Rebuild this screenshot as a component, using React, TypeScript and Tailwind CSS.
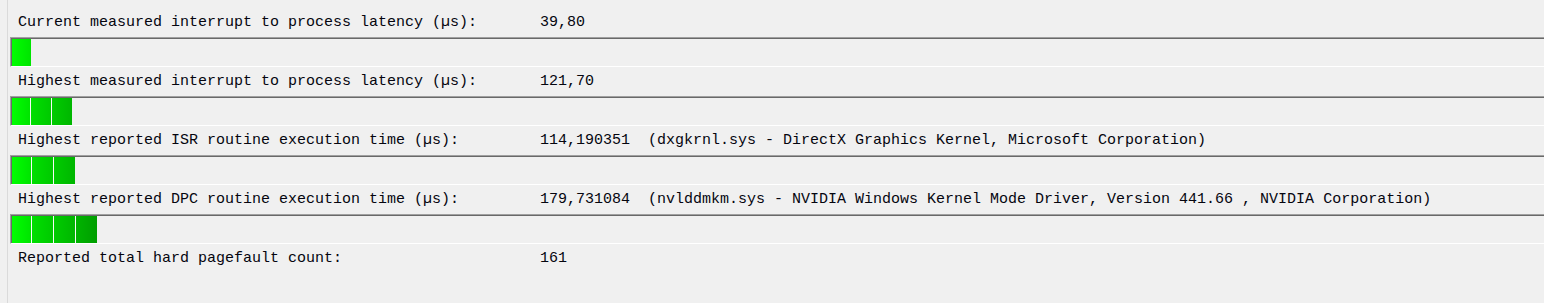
const rows = [
  {
    label: "Current measured interrupt to process latency (µs):",
    value: "39,80",
    segments: [19],
  },
  {
    label: "Highest measured interrupt to process latency (µs):",
    value: "121,70",
    segments: [18, 20, 20],
  },
  {
    label: "Highest reported ISR routine execution time (µs):",
    value: "114,190351  (dxgkrnl.sys - DirectX Graphics Kernel, Microsoft Corporation)",
    segments: [19, 21, 21],
  },
  {
    label: "Highest reported DPC routine execution time (µs):",
    value:
      "179,731084  (nvlddmkm.sys - NVIDIA Windows Kernel Mode Driver, Version 441.66 , NVIDIA Corporation)",
    segments: [19, 21, 21, 21],
  },
  {
    label: "Reported total hard pagefault count:",
    value: "161",
    segments: null,
  },
];

const segmentColors = [
  "bg-gradient-to-r from-[#00ff00] to-[#00e400]",
  "bg-gradient-to-r from-[#00df00] to-[#00c900]",
  "bg-gradient-to-r from-[#00cc00] to-[#00b600]",
  "bg-gradient-to-r from-[#00b400] to-[#009e00]",
];

function LatencyBar({ segments }: { segments: number[] }) {
  return (
    <div className="ml-[2px] h-[30px] border-t border-l border-b border-t-[#a0a0a0] border-l-[#a0a0a0] border-b-white">
      <div className="h-full flex border-t border-l border-[#696969]">
        {segments.map((w, i) => (
          <div
            key={i}
            className={`h-full ${i > 0 ? "border-l border-[#f8f8f8]" : ""} ${segmentColors[i]}`}
            style={{ width: i > 0 ? w + 1 : w }}
          />
        ))}
      </div>
    </div>
  );
}

export default function App() {
  return (
    <div className="w-full h-[303px] bg-[#f0f0f0] pl-[7px] overflow-hidden">
      <div className="h-full border-l border-[#dadada] pt-[8px] font-['Liberation_Mono','Courier_New',monospace] text-[15px] text-[#05050f]">
        {rows.map((row, i) => (
          <div key={i}>
            <div className="h-[29px] flex items-center pt-[2px] pl-[10px] whitespace-pre">
              <span className="w-[522px] shrink-0">{row.label}</span>
              <span>{row.value}</span>
            </div>
            {row.segments && <LatencyBar segments={row.segments} />}
          </div>
        ))}
      </div>
    </div>
  );
}
